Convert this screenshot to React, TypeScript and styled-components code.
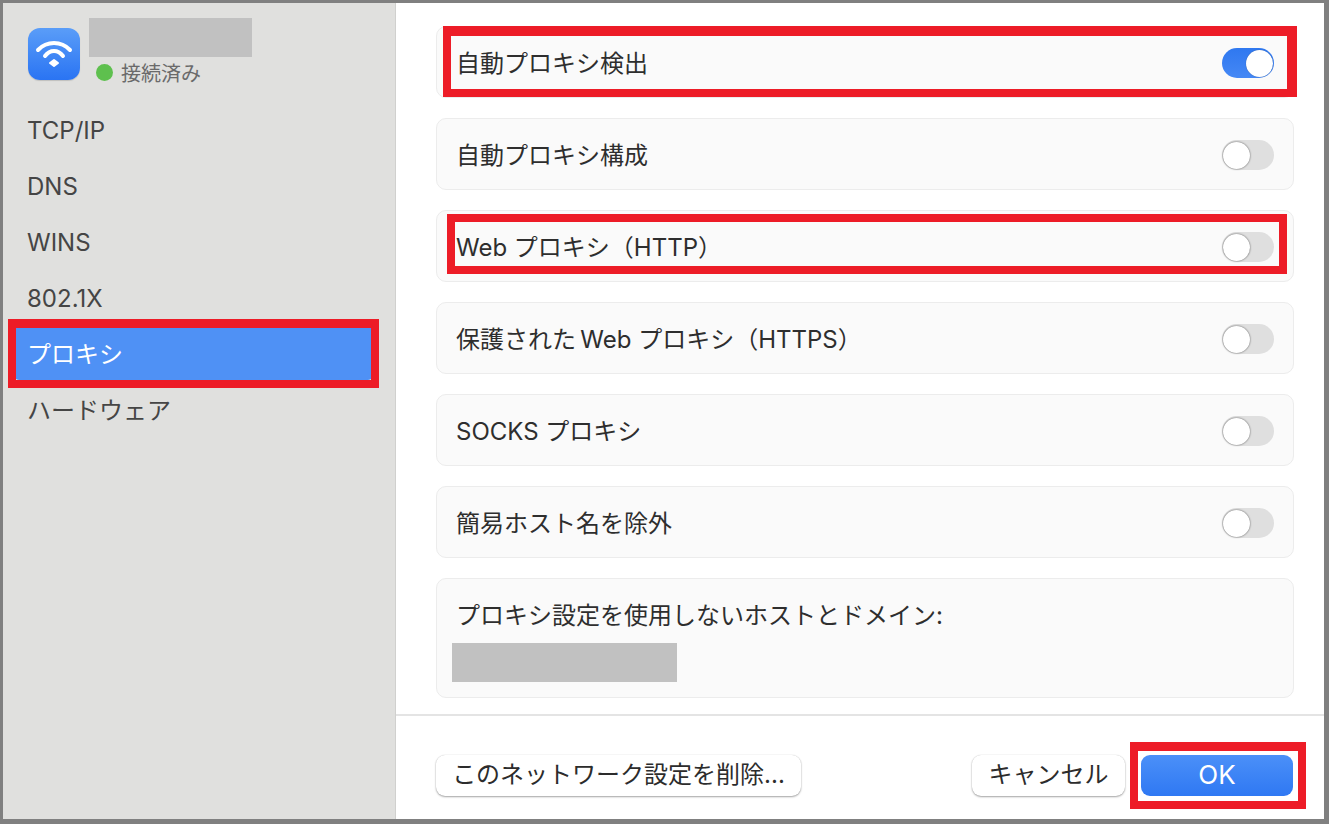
import * as React from 'react';
import styled, { createGlobalStyle } from 'styled-components';

const FONT = `Inter, "Noto Sans CJK JP", sans-serif`;

const GlobalStyle = createGlobalStyle`
html, body {
    margin: 0;
    padding: 0;
    background: #808080;
}
* {
    box-sizing: border-box;
}
`;

const Frame = styled.div`
position: relative;
width: 1329px;
height: 824px;
padding: 3px 5px 5px 3px;
background: #808080;
overflow: hidden;
font-family: ${FONT};
`;

const Window = styled.div`
display: flex;
height: 100%;
background: #ffffff;
`;

const Sidebar = styled.aside`
flex: 0 0 393px;
background: #e0e0de;
border-right: 1px solid #d0d0ce;
padding: 15px 22px 0 11px;
`;

const Header = styled.div`
display: flex;
gap: 9px;
padding-left: 14px;
height: 84px;
`;

const AppIcon = styled.div`
flex: 0 0 52px;
width: 52px;
height: 52px;
margin-top: 10px;
border-radius: 12px;
background: linear-gradient(#5a9df8, #2a74f3);
box-shadow: 0 1px 1px rgba(0, 0, 0, 0.15);
`;

const HeaderText = styled.div`
display: flex;
flex-direction: column;
`;

const Redacted = styled.div<{ w: number; h: number }>`
width: ${(p) => p.w}px;
height: ${(p) => p.h}px;
background: #c1c1c1;
`;

const Status = styled.div`
display: flex;
align-items: center;
gap: 9px;
padding-left: 7px;
font-size: 20px;
line-height: 28px;
color: #6a6a6a;
`;

const StatusText = styled.span`
margin-top: 3px;
margin-left: -1px;
`;

const Dot = styled.span`
width: 17px;
height: 17px;
border-radius: 50%;
background: #5ec04e;
`;

const NavList = styled.nav`
display: flex;
flex-direction: column;
`;

const NavItem = styled.div<{ active?: boolean }>`
height: 56px;
margin-top: ${(p) => (p.active ? '-2px' : '0')};
padding-left: 13px;
display: flex;
align-items: center;
font-size: 24px;
border-radius: 5px;
color: ${(p) => (p.active ? '#ffffff' : '#454545')};
background: ${(p) => (p.active ? '#4f91f5' : 'transparent')};
`;

const Main = styled.main`
flex: 1;
display: flex;
flex-direction: column;
min-width: 0;
`;

const Cards = styled.div`
flex: 1;
display: flex;
flex-direction: column;
gap: 20px;
padding: 23px 30px 0 40px;
`;

const Card = styled.div`
height: 72px;
padding: 0 19px;
display: flex;
align-items: center;
justify-content: space-between;
background: #fafafa;
border: 1px solid #ececec;
border-radius: 10px;
`;

const RowLabel = styled.span`
font-size: 24px;
line-height: 30px;
margin-top: 3px;
color: #2e2e2e;
`;

const TallCard = styled.div`
height: 120px;
padding: 19px 19px 0 15px;
background: #fafafa;
border: 1px solid #ececec;
border-radius: 10px;
`;

const TallLabel = styled.div`
padding-left: 4px;
font-size: 24px;
line-height: 36px;
color: #2e2e2e;
margin-bottom: 9px;
`;

const Toggle = styled.div<{ on?: boolean }>`
position: relative;
width: 52px;
height: 30px;
margin-top: 2px;
border-radius: 15px;
background: ${(p) => (p.on ? 'linear-gradient(#2f78f0, #4588f5)' : '#dfdfdf')};
`;

const Knob = styled.div<{ on?: boolean }>`
position: absolute;
top: 1.5px;
left: ${(p) => (p.on ? '24px' : '1px')};
width: 27px;
height: 27px;
border-radius: 50%;
background: #ffffff;
box-shadow: ${(p) => (p.on ? '0 0 1px rgba(0, 0, 0, 0.4)' : '0 0 2px rgba(0, 0, 0, 0.65)')};
`;

const Footer = styled.footer`
flex: 0 0 105px;
border-top: 2px solid #e4e4e4;
padding: 39px 31px 0 40px;
display: flex;
align-items: flex-start;
justify-content: space-between;
`;

const FooterRight = styled.div`
display: flex;
gap: 16px;
`;

const Button = styled.div<{ primary?: boolean; w: number }>`
width: ${(p) => p.w}px;
height: 41px;
padding-bottom: ${(p) => (p.primary ? '2px' : '6px')};
display: flex;
align-items: center;
justify-content: center;
border-radius: 9px;
font-size: ${(p) => (p.primary ? '26px' : '24px')};
color: ${(p) => (p.primary ? '#ffffff' : '#2c2c2c')};
background: ${(p) => (p.primary ? 'linear-gradient(#4b90f8, #2f78f3)' : '#ffffff')};
box-shadow: ${(p) => (p.primary ? 'none' : '0 1px 2px rgba(0, 0, 0, 0.35), 0 0 1px rgba(0, 0, 0, 0.2)')};
`;

const Callout = styled.div<{ x: number; y: number; w: number; h: number; edges: string }>`
position: absolute;
left: ${(p) => p.x}px;
top: ${(p) => p.y}px;
width: ${(p) => p.w}px;
height: ${(p) => p.h}px;
border-style: solid;
border-color: #ed1c27;
border-width: ${(p) => p.edges};
pointer-events: none;
`;

const WifiIcon = () => (
    <svg width="52" height="52" viewBox="0 0 52 52" fill="none" stroke="#ffffff" strokeLinecap="round">
        <path d="M10 22 C19 12.7 33 12.7 42 22" strokeWidth="4" />
        <path d="M17 28 C22 21.3 30 21.3 35 28" strokeWidth="4" />
        <path d="M26 32 L30 35 L26 38 L22 35 Z" fill="#ffffff" strokeWidth="2" strokeLinejoin="round" />
    </svg>
);

const Switch = ({ on }: { on?: boolean }) => (
    <Toggle on={on}>
        <Knob on={on} />
    </Toggle>
);

const navItems = ['TCP/IP', 'DNS', 'WINS', '802.1X', 'プロキシ', 'ハードウェア'];

const rows = [
    { label: '自動プロキシ検出', on: true },
    { label: '自動プロキシ構成' },
    { label: 'Web プロキシ（HTTP）' },
    { label: '保護された\u2009Web プロキシ（HTTPS）' },
    { label: 'SOCKS プロキシ' },
    { label: '簡易ホスト名を除外' },
];

export default function App() {
    return (
        <Frame>
            <GlobalStyle />
            <Window>
                <Sidebar>
                    <Header>
                        <AppIcon>
                            <WifiIcon />
                        </AppIcon>
                        <HeaderText>
                            <Redacted w={163} h={39} />
                            <Status>
                                <Dot />
                                <StatusText>接続済み</StatusText>
                            </Status>
                        </HeaderText>
                    </Header>
                    <NavList>
                        {navItems.map((item) => (
                            <NavItem key={item} active={item === 'プロキシ'}>{item}</NavItem>
                        ))}
                    </NavList>
                </Sidebar>
                <Main>
                    <Cards>
                        {rows.map((row) => (
                            <Card key={row.label}>
                                <RowLabel>{row.label}</RowLabel>
                                <Switch on={row.on} />
                            </Card>
                        ))}
                        <TallCard>
                            <TallLabel>プロキシ設定を使用しないホストとドメイン:</TallLabel>
                            <Redacted w={225} h={39} />
                        </TallCard>
                    </Cards>
                    <Footer>
                        <Button w={365}>このネットワーク設定を削除...</Button>
                        <FooterRight>
                            <Button w={153}>キャンセル</Button>
                            <Button primary w={152}>OK</Button>
                        </FooterRight>
                    </Footer>
                </Main>
            </Window>
            <Callout x={8} y={319} w={371} h={69} edges="9px 8px 8px 8px" />
            <Callout x={443} y={26} w={854} h={71} edges="10px 10px 8px 8px" />
            <Callout x={447} y={214} w={840} h={60} edges="8px 8px 8px 8px" />
            <Callout x={1130} y={742} w={176} h={67} edges="9px 8px 8px 8px" />
        </Frame>
    );
}
